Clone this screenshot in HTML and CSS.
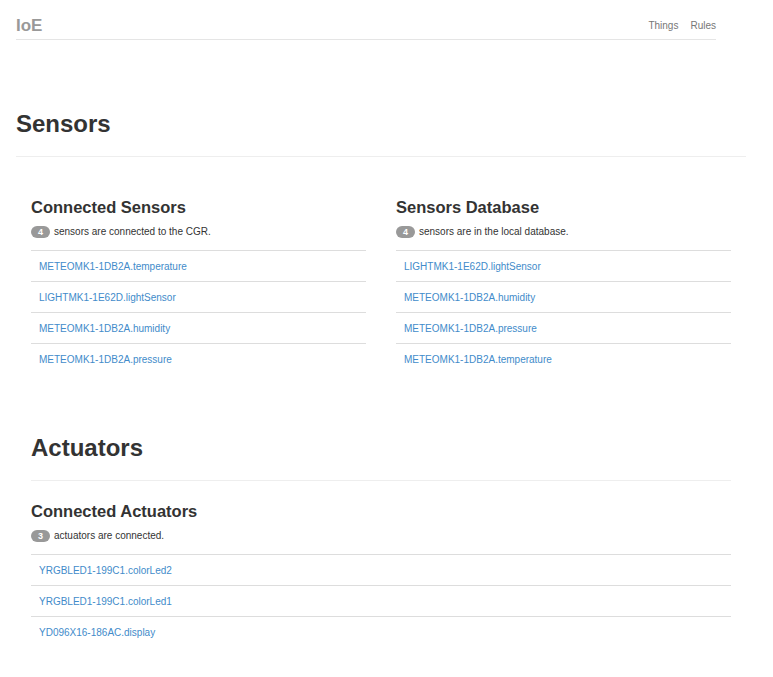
FILE: index.html
```html
<!DOCTYPE html>
<html>
<head>
<meta charset="utf-8">
<title>IoE</title>
<link rel="stylesheet" href="styles.css">
</head>
<body>
<header class="topbar">
  <span class="brand">IoE</span>
  <nav class="nav">
    <a href="#">Things</a>
    <a href="#">Rules</a>
  </nav>
</header>

<section class="sensors">
  <h1 class="page-title">Sensors</h1>
  <div class="cols">
    <div class="col">
      <h3 class="sub">Connected Sensors</h3>
      <p class="count"><span class="badge">4</span> sensors are connected to the CGR.</p>
      <ul class="list">
        <li><a href="#">METEOMK1-1DB2A.temperature</a></li>
        <li><a href="#">LIGHTMK1-1E62D.lightSensor</a></li>
        <li><a href="#">METEOMK1-1DB2A.humidity</a></li>
        <li><a href="#">METEOMK1-1DB2A.pressure</a></li>
      </ul>
    </div>
    <div class="col">
      <h3 class="sub">Sensors Database</h3>
      <p class="count"><span class="badge">4</span> sensors are in the local database.</p>
      <ul class="list">
        <li><a href="#">LIGHTMK1-1E62D.lightSensor</a></li>
        <li><a href="#">METEOMK1-1DB2A.humidity</a></li>
        <li><a href="#">METEOMK1-1DB2A.pressure</a></li>
        <li><a href="#">METEOMK1-1DB2A.temperature</a></li>
      </ul>
    </div>
  </div>
</section>

<section class="actuators">
  <h1 class="page-title">Actuators</h1>
  <h3 class="sub">Connected Actuators</h3>
  <p class="count"><span class="badge">3</span> actuators are connected.</p>
  <ul class="list">
    <li><a href="#">YRGBLED1-199C1.colorLed2</a></li>
    <li><a href="#">YRGBLED1-199C1.colorLed1</a></li>
    <li><a href="#">YD096X16-186AC.display</a></li>
  </ul>
</section>
</body>
</html>
```

FILE: styles.css
```css
html, body {
  margin: 0;
  padding: 0;
  background: #fff;
}
body {
  font-family: "Liberation Sans", Arial, Helvetica, sans-serif;
  color: #333;
  font-size: 10px;
}
a {
  color: #428bca;
  text-decoration: none;
}
.topbar {
  margin-left: 16px;
  width: 700px;
  height: 26px;
  padding-top: 13px;
  border-bottom: 1px solid #e5e5e5;
  display: flex;
  align-items: center;
  justify-content: space-between;
}
.brand {
  font-size: 17px;
  font-weight: bold;
  color: #999;
  line-height: 20px;
}
.nav {
  display: flex;
  gap: 12px;
  line-height: 14px;
}
.nav a {
  color: #777;
  font-size: 10px;
}
.page-title {
  margin: 0;
  font-size: 24px;
  line-height: 28px;
  font-weight: bold;
  padding-bottom: 18px;
  border-bottom: 1px solid #eee;
}
.sensors {
  margin: 70px 0 0 16px;
  width: 730px;
}
.cols {
  display: flex;
  gap: 30px;
  margin: 40px 0 0 15px;
  width: 700px;
}
.col {
  flex: 1;
}
.sub {
  margin: 0;
  font-size: 16.5px;
  line-height: 20px;
  font-weight: bold;
}
.count {
  margin: 9px 0 0;
  line-height: 12px;
  display: flex;
  align-items: center;
  gap: 4px;
}
.badge {
  display: inline-flex;
  align-items: center;
  justify-content: center;
  width: 19px;
  height: 12px;
  border-radius: 6px;
  background: #999;
  color: #fff;
  font-size: 9px;
  font-weight: bold;
}
.list {
  list-style: none;
  margin: 12px 0 0;
  padding: 0;
}
.list li {
  border-top: 1px solid #ddd;
  height: 30px;
  line-height: 31px;
  padding-left: 8px;
}
.actuators {
  margin: 60px 0 30px 31px;
  width: 700px;
}
.actuators .sub {
  margin-top: 20px;
}
```
